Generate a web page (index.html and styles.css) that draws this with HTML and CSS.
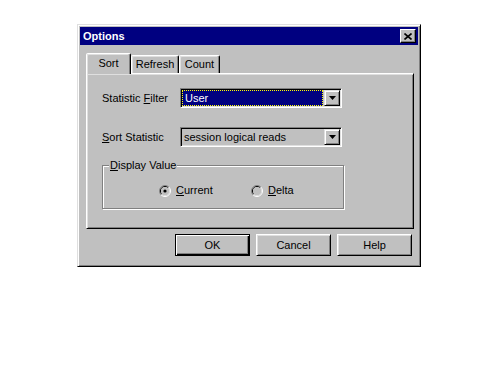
FILE: index.html
```html
<!DOCTYPE html>
<html>
<head>
    <title>Options</title>
    <link rel="stylesheet" href="styles.css">
</head>
<body>
    <div class="window">
        <div class="titlebar">
            <span>Options</span>
            <button class="close" type="button">
                <svg width="8" height="7" viewBox="0 0 8 7"><path d="M0.5 0.5L7.5 6.5M7.5 0.5L0.5 6.5" stroke="#000" stroke-width="1.6" fill="none"/></svg>
            </button>
        </div>
        <div class="dialog-body">
            <div class="tabs">
                <div class="tab tab-sort active">Sort</div>
                <div class="tab tab-refresh">Refresh</div>
                <div class="tab tab-count">Count</div>
            </div>
            <div class="panel">
                <div class="field">
                    <label>Statistic <u>F</u>ilter</label>
                    <div class="combo">
                        <span class="value selected">User</span>
                        <span class="drop"><svg width="7" height="4" viewBox="0 0 7 4"><path d="M0 0H7L3.5 4Z" fill="#000"/></svg></span>
                    </div>
                </div>
                <div class="field">
                    <label><u>S</u>ort Statistic</label>
                    <div class="combo">
                        <span class="value">session logical reads</span>
                        <span class="drop"><svg width="7" height="4" viewBox="0 0 7 4"><path d="M0 0H7L3.5 4Z" fill="#000"/></svg></span>
                    </div>
                </div>
                <fieldset class="group">
                    <legend><u>D</u>isplay Value</legend>
                    <div class="radios">
                        <div class="radio">
                            <svg width="12" height="12" viewBox="0 0 12 12">
                                <path d="M2.1 9.9A5.5 5.5 0 0 1 9.9 2.1" stroke="#808080" fill="none"/>
                                <path d="M9.9 2.1A5.5 5.5 0 0 1 2.1 9.9" stroke="#fff" fill="none"/>
                                <path d="M2.8 9.2A4.5 4.5 0 0 1 9.2 2.8" stroke="#000" fill="none"/>
                                <path d="M9.2 2.8A4.5 4.5 0 0 1 2.8 9.2" stroke="#dfdfdf" fill="none"/>
                                <circle cx="6" cy="6" r="4" fill="#c0c0c0"/>
                                <circle cx="6" cy="6" r="1.6" fill="#000"/>
                            </svg>
                            <span><u>C</u>urrent</span>
                        </div>
                        <div class="radio">
                            <svg width="12" height="12" viewBox="0 0 12 12">
                                <path d="M2.1 9.9A5.5 5.5 0 0 1 9.9 2.1" stroke="#808080" fill="none"/>
                                <path d="M9.9 2.1A5.5 5.5 0 0 1 2.1 9.9" stroke="#fff" fill="none"/>
                                <path d="M2.8 9.2A4.5 4.5 0 0 1 9.2 2.8" stroke="#000" fill="none"/>
                                <path d="M9.2 2.8A4.5 4.5 0 0 1 2.8 9.2" stroke="#dfdfdf" fill="none"/>
                                <circle cx="6" cy="6" r="4" fill="#c0c0c0"/>
                            </svg>
                            <span><u>D</u>elta</span>
                        </div>
                    </div>
                </fieldset>
            </div>
            <div class="buttons">
                <button type="button" class="btn default">OK</button>
                <button type="button" class="btn">Cancel</button>
                <button type="button" class="btn">Help</button>
            </div>
        </div>
    </div>
</body>
</html>
```

FILE: styles.css
```css
body {
    margin: 0;
    background: #fff;
    font-family: "Liberation Sans", Arial, sans-serif;
    font-size: 11px;
    color: #000;
}
.window {
    box-sizing: border-box;
    width: 344px;
    height: 243px;
    margin: 24px 0 0 77px;
    padding: 2px;
    background: #c0c0c0;
    border: 1px solid;
    border-color: #dfdfdf #000 #000 #dfdfdf;
    box-shadow: inset 1px 1px #fff, inset -1px -1px #808080;
}
.titlebar {
    height: 18px;
    display: flex;
    align-items: center;
    justify-content: space-between;
    padding: 0 2px 0 3px;
    background: #000080;
    color: #fff;
    font-weight: bold;
}
.close {
    box-sizing: border-box;
    width: 16px;
    height: 14px;
    padding: 0;
    display: flex;
    align-items: center;
    justify-content: center;
    background: #c0c0c0;
    border: 1px solid;
    border-color: #fff #000 #000 #fff;
    box-shadow: inset -1px -1px #808080;
}
.dialog-body {
    padding: 8px 4px 0 6px;
}
.tabs {
    display: flex;
    align-items: flex-end;
    height: 20px;
}
.tab {
    box-sizing: border-box;
    height: 18px;
    line-height: 17px;
    text-align: center;
    border: 1px solid;
    border-bottom: 0;
    border-color: #fff #000 transparent #fff;
    border-radius: 2px 2px 0 0;
    box-shadow: inset -1px 0 #808080, inset 1px 1px #dfdfdf;
}
.tab.active {
    position: relative;
    z-index: 1;
    height: 21px;
    line-height: 18px;
    margin-bottom: -1px;
    background: #c0c0c0;
}
.tab-sort { width: 45px; }
.tab-refresh { width: 48px; }
.tab-count { width: 41px; }
.panel {
    box-sizing: border-box;
    height: 156px;
    padding: 14px 15px 0;
    border: 1px solid;
    border-color: #fff #000 #000 #fff;
    box-shadow: inset 1px 1px #dfdfdf, inset -1px -1px #808080;
}
.field {
    display: flex;
    align-items: center;
    height: 20px;
}
.field + .field {
    margin-top: 19px;
}
.field label {
    width: 78px;
}
.combo {
    box-sizing: border-box;
    width: 162px;
    height: 20px;
    padding: 1px;
    display: flex;
    border: 1px solid;
    border-color: #808080 #fff #fff #808080;
    box-shadow: inset 1px 1px #000, inset -1px -1px #dfdfdf;
}
.value {
    flex: 1;
    padding-left: 2px;
    line-height: 16px;
    white-space: nowrap;
}
.value.selected {
    margin-right: 1px;
    padding-left: 3px;
    background: #000080;
    color: #fff;
    outline: 1px dotted #ff0;
    outline-offset: -1px;
}
.drop {
    box-sizing: border-box;
    width: 16px;
    height: 16px;
    display: flex;
    align-items: center;
    justify-content: center;
    border: 1px solid;
    border-color: #dfdfdf #000 #000 #dfdfdf;
    box-shadow: inset 1px 1px #fff, inset -1px -1px #808080;
}
.group {
    box-sizing: border-box;
    width: 240px;
    margin: 12px 0 0;
    padding: 0 0 11px;
    border: 1px solid #808080;
    box-shadow: inset 1px 1px #fff, 1px 1px #fff;
}
.group legend {
    margin-left: 6px;
    padding: 0 1px;
    line-height: 13px;
    background: #c0c0c0;
}
.radios {
    display: flex;
    margin-top: 12px;
    padding-left: 56px;
}
.radio {
    display: flex;
    align-items: center;
    gap: 5px;
    width: 92px;
    line-height: 13px;
}
.buttons {
    display: flex;
    justify-content: flex-end;
    gap: 6px;
    margin-top: 5px;
    padding-right: 2px;
}
.btn {
    box-sizing: border-box;
    width: 75px;
    height: 22px;
    padding: 0;
    font: inherit;
    color: #000;
    background: #c0c0c0;
    border: 1px solid;
    border-color: #fff #000 #000 #fff;
    box-shadow: inset 1px 1px #dfdfdf, inset -1px -1px #808080;
}
.btn.default {
    border-color: #000;
    box-shadow: inset 1px 1px #fff, inset -1px -1px #000, inset -2px -2px #808080;
}
```
